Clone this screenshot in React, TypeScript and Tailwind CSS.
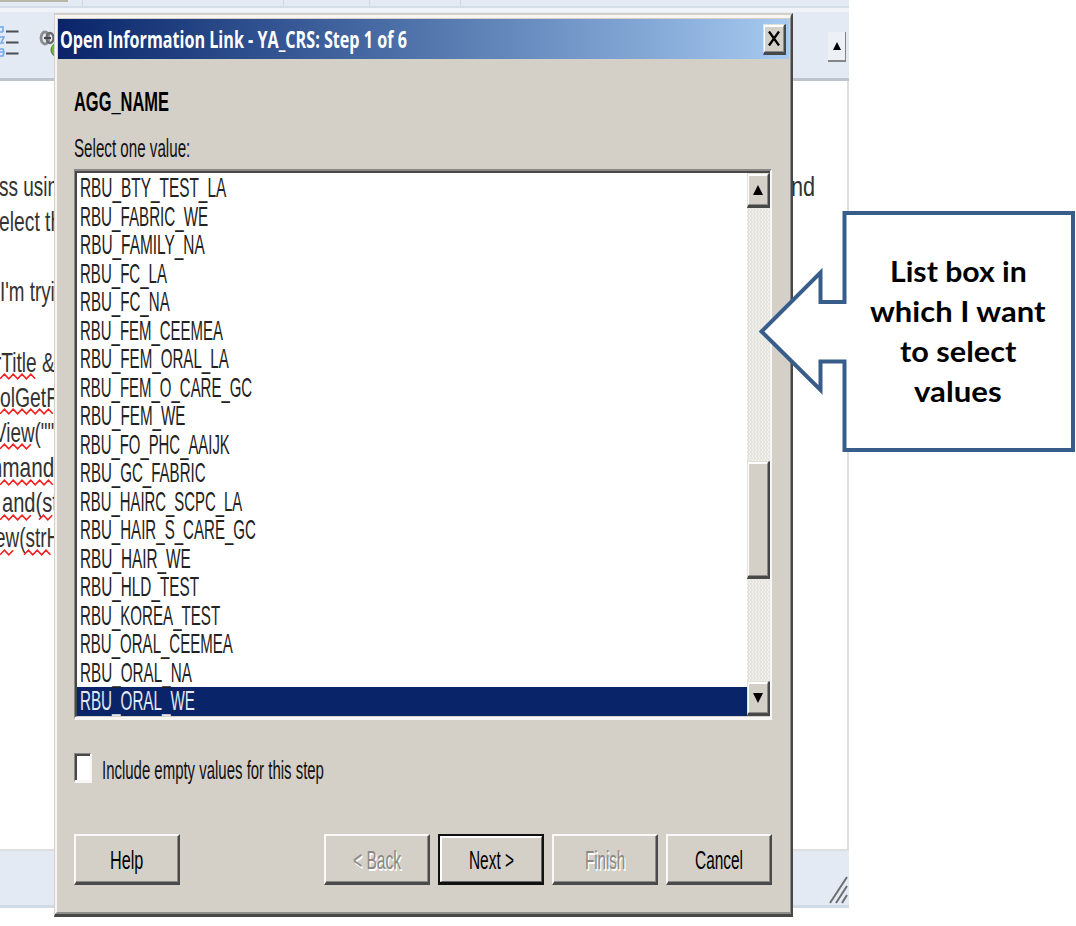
import { useLayoutEffect, useRef, useState } from "react";
import type { ReactNode } from "react";

type FitProps = { text: string; width: number; className?: string };

/* Text condensed horizontally so that it spans exactly `width` pixels. */
function FitText({ text, width, className = "" }: FitProps) {
  const ref = useRef<HTMLSpanElement>(null);
  const [scale, setScale] = useState(0.6);
  useLayoutEffect(() => {
    if (ref.current) setScale(width / ref.current.offsetWidth);
  }, [text, width]);
  return (
    <span className={`block whitespace-pre ${className}`} style={{ width }}>
      <span ref={ref} className="inline-block origin-left" style={{ transform: `scaleX(${scale})` }}>
        {text}
      </span>
    </span>
  );
}

const rows: [string, number][] = [
  ["RBU_BTY_TEST_LA", 146],
  ["RBU_FABRIC_WE", 128],
  ["RBU_FAMILY_NA", 125],
  ["RBU_FC_LA", 87],
  ["RBU_FC_NA", 90],
  ["RBU_FEM_CEEMEA", 143],
  ["RBU_FEM_ORAL_LA", 149],
  ["RBU_FEM_O_CARE_GC", 172],
  ["RBU_FEM_WE", 105.5],
  ["RBU_FO_PHC_AAIJK", 150],
  ["RBU_GC_FABRIC", 125.5],
  ["RBU_HAIRC_SCPC_LA", 162.5],
  ["RBU_HAIR_S_CARE_GC", 176],
  ["RBU_HAIR_WE", 111],
  ["RBU_HLD_TEST", 119],
  ["RBU_KOREA_TEST", 140],
  ["RBU_ORAL_CEEMEA", 153],
  ["RBU_ORAL_NA", 112],
  ["RBU_ORAL_WE", 115],
];

type EditorLine = { text: string; x: number; width: number; marks?: [number, number][] };

const editorLines: EditorLine[] = [
  { text: "ss usin", x: -1, width: 59 },
  { text: "elect th", x: -1, width: 62 },
  { text: "", x: 0, width: 0 },
  { text: "I'm tryi", x: 0, width: 55 },
  { text: "", x: 0, width: 0 },
  { text: "rTitle &", x: -5, width: 60, marks: [[0, 37]] },
  { text: "olGetF", x: 0, width: 58, marks: [[0, 54]] },
  { text: 'View(""', x: -6, width: 60, marks: [[0, 32]] },
  { text: "mmand", x: -15, width: 69, marks: [[0, 54]] },
  { text: "and(st", x: 2, width: 56, marks: [[0, 35], [39, 54]] },
  { text: "ew(strH", x: -5, width: 65, marks: [[0, 17], [24, 54]] },
];

function Squiggle({ from, to }: { from: number; to: number }) {
  const pts: string[] = [];
  for (let x = from, i = 0; x <= to; x += 4.4, i++) pts.push(`${x},${i % 2 ? 1.2 : 5.8}`);
  return <polyline points={pts.join(" ")} fill="none" stroke="#f52020" strokeWidth="1.6" />;
}

function Editor() {
  return (
    <div className="flex h-[908px] w-[849px] flex-col bg-[#e3eaf3]">
      <div className="flex h-[12px] shrink-0 border-b-4 border-[#f0f4f9]">
        <div className="relative flex w-full border-b-2 border-[#d4dee8]">
          <div className="h-[2px] w-[68px] bg-[#b8b8a4]" />
          <div className="ml-[14px] w-px bg-[#cfd9e4]" />
          <div className="ml-[200px] w-px bg-[#cfd9e4]" />
          <div className="ml-[85px] w-px bg-[#cfd9e4]" />
          <div className="ml-[90px] w-px bg-[#cfd9e4]" />
        </div>
      </div>
      <div className="flex h-[69px] shrink-0 items-start justify-between border-b-[3px] border-[#bfc3cb]">
        <svg className="mt-[12px] h-[36px] w-[60px]" viewBox="0 24 60 36" fill="none">
          <path d="M0 27h3v5M0 32h3M0 37h4l-3 6h3M0 49h3l1 3-1 4H0M0 52h3" stroke="#72a9ee" strokeWidth="1.6" />
          <path d="M6 31.500h12.500M6 42.500h12.500M6 53.500h12.500" stroke="#4b4d50" strokeWidth="1.8" />
          <ellipse cx="45" cy="38" rx="4" ry="6" stroke="#8a8c8f" strokeWidth="2.800" />
          <ellipse cx="50" cy="38" rx="3.500" ry="5" stroke="#68696c" strokeWidth="2.400" />
          <path d="M44 38h7" stroke="#45474a" strokeWidth="2" />
          <ellipse cx="57" cy="50" rx="6" ry="6.500" fill="#6bbb36" stroke="#398014" />
        </svg>
        <div className="mt-[20px] mr-[3px] flex h-[30px] w-[18px] items-center justify-center border-r-[1.500px] border-b-2 border-[#858585] bg-[#edf0f4]">
          <svg className="h-[8px] w-[8px]" viewBox="0 0 8 8"><path d="M4 0l4 8H0z" fill="#000" /></svg>
        </div>
      </div>
      <div className="flex h-[770px] shrink-0 justify-between overflow-hidden border-r-2 border-b-2 border-[#dedede] bg-white pt-[88px] text-[28px] leading-[35.150px] text-[#333]">
        <div className="w-[54px] overflow-hidden">
          {editorLines.map((l, i) => (
            <div key={i} className="relative h-[35.150px]">
              {l.text && (
                <div style={{ marginLeft: l.x }}>
                  <FitText text={l.text} width={l.width} />
                </div>
              )}
              {l.marks && (
                <svg className="absolute top-[28.500px] left-0 h-[7px] w-[54px]" viewBox="0 0 54 7">
                  {l.marks.map(([a, b]) => <Squiggle key={a} from={a} to={b} />)}
                </svg>
              )}
            </div>
          ))}
        </div>
        <div className="mr-[32px]">
          <FitText text="nd" width={24} />
        </div>
      </div>
      <div className="flex h-[57px] shrink-0 items-end justify-end border-b-[3px] border-[#d0dae4]">
        <svg className="mb-px h-[28px] w-[20px]" viewBox="0 0 20 28">
          <path d="M1 27L18 1M7 27L18 10M13 27L18 19" stroke="#6c6e70" strokeWidth="2" />
        </svg>
      </div>
    </div>
  );
}

function Raised({ className = "", children }: { className?: string; children?: ReactNode }) {
  return (
    <div className={`shrink-0 border-t-[1.500px] border-r-2 border-b-[3px] border-l border-t-[#e4e0d8] border-r-[#484848] border-b-[#484848] border-l-[#e4e0d8] bg-[#d4d0c8] ${className}`}>
      <div className="flex h-full items-center justify-center border-t-2 border-r border-b border-l-[1.500px] border-t-white border-r-[#8c8a86] border-b-[#8c8a86] border-l-white">
        {children}
      </div>
    </div>
  );
}

type ButtonProps = { label: string; width: number; disabled?: boolean; focused?: boolean; className?: string };

function DialogButton({ label, width, disabled, focused, className = "" }: ButtonProps) {
  return (
    <button
      disabled={disabled}
      className={`flex h-[51px] w-[106px] shrink-0 border-t-2 border-r-2 border-b-[3px] border-l-2 ${
        focused
          ? "border-[#111]"
          : "border-t-[#faf9f7] border-r-[#4a4a4a] border-b-[#4a4a4a] border-l-[#faf9f7]"
      } ${className}`}
    >
      <span
        className={`flex h-full w-full items-center justify-center border-r border-b text-[26px] leading-[26px] ${
          focused ? "border-t-2 border-l-2 border-t-white border-r-[#666] border-b-[#666] border-l-white" : "border-[#8d8b87]"
        } ${disabled ? "text-[#8c8a86] [text-shadow:2px_2px_0_#fff]" : "text-black"}`}
      >
        <FitText text={label} width={width} className={focused ? "mt-px text-left" : "mt-[3px] text-left"} />
      </span>
    </button>
  );
}

function Scrollbar() {
  return (
    <div className="flex w-[23px] shrink-0 flex-col bg-[conic-gradient(#e6e4df_25%,#f3f2ef_0_50%,#e6e4df_0_75%,#f3f2ef_0)] bg-[length:3px_4px]">
      <Raised className="h-[35px]">
        <svg className="h-[10px] w-[10px]" viewBox="0 0 10 10"><path d="M5 0l5 10H0z" fill="#000" /></svg>
      </Raised>
      <Raised className="mt-[253px] h-[118px]" />
      <Raised className="mt-auto h-[35px]">
        <svg className="h-[10px] w-[10px]" viewBox="0 0 10 10"><path d="M0 0h10L5 10z" fill="#000" /></svg>
      </Raised>
    </div>
  );
}

function Dialog() {
  return (
    <div className="absolute top-[13px] left-[54px] flex h-[904px] w-[739px] flex-col border-t-2 border-r-2 border-b-[3px] border-l-[1.500px] border-t-[#d4d0c8] border-r-[#484848] border-b-[#484848] border-l-[#d4d0c8] bg-[#d4d0c8]">
      <div className="flex min-h-0 flex-1 flex-col border-t-[3px] border-r border-b-2 border-l-2 border-t-[#f8f6f2] border-r-[#8e8c88] border-b-[#8e8c88] border-l-[#f8f6f2]">
        <div className="mt-px mr-[1px] ml-[0.500px] flex h-[40px] shrink-0 items-center justify-between bg-linear-to-r from-[#0a246a] to-[#a6caf0] pr-[3px] pl-[2px] font-['Open_Sans',sans-serif] text-[24px] leading-[40px] font-bold text-white">
          <FitText text="Open Information Link - YA_CRS: Step 1 of 6" width={347} />
          <Raised className="h-[31px] w-[23px]">
            <svg className="h-[15px] w-[12px]" viewBox="0 0 12 15"><path d="M1 0.500L11 14.500M11 0.500L1 14.500" stroke="#000" strokeWidth="2.300" /></svg>
          </Raised>
        </div>
        <div className="flex flex-1 flex-col pr-[18px] pl-[17px] text-[26px] text-black">
          <FitText text="AGG_NAME" width={95} className="mt-[28px] text-[27px] leading-[30px] font-bold" />
          <FitText text="Select one value:" width={116} className="mt-[16px] leading-[30px] text-[#111]" />
          <div className="mt-[6px] h-[551px] w-[698px] border-t-2 border-r-2 border-b-[3px] border-l-[1.500px] border-t-[#8b8986] border-r-[#f8f7f5] border-b-[#f8f7f5] border-l-[#8b8986]">
            <div className="flex h-full border-t-2 border-b border-l-2 border-t-[#484848] border-b-[#d4d0c8] border-l-[#484848] bg-white">
              <div className="flex-1 pt-px text-[27.500px] leading-[28.530px] text-[#222]">
                {rows.map(([name, w]) => (
                  <div
                    key={name}
                    className={name === "RBU_ORAL_WE" ? "h-[28.530px] bg-[#0a246a] pl-[3px] text-[#e4e8f2]" : "h-[28.530px] pl-[3px]"}
                  >
                    <FitText text={name} width={w} />
                  </div>
                ))}
              </div>
              <Scrollbar />
            </div>
          </div>
          <div className="mt-[33px] flex h-[36px] items-start">
            <div className="h-[30px] w-[18px] border-t-[1.500px] border-r-2 border-b-[3px] border-l border-t-[#8b8986] border-r-[#f8f7f5] border-b-[#f8f7f5] border-l-[#8b8986]">
              <div className="h-full border-t-2 border-l-2 border-[#484848] bg-white" />
            </div>
            <FitText text="Include empty values for this step" width={222} className="mt-[2px] ml-[10px] leading-[30px] text-[#111]" />
          </div>
          <div className="mt-[45px] flex">
            <DialogButton label="Help" width={33} />
            <DialogButton label="< Back" width={48} disabled className="ml-[144px]" />
            <DialogButton label="Next >" width={45} focused className="ml-[8px]" />
            <DialogButton label="Finish" width={40} disabled className="ml-[8px]" />
            <DialogButton label="Cancel" width={48} className="ml-[8px]" />
          </div>
        </div>
      </div>
    </div>
  );
}

function Callout() {
  return (
    <div className="absolute top-[211px] left-[758px] h-[241px] w-[318px]">
      <svg className="absolute inset-0 h-full w-full" viewBox="758 211 318 241">
        <path d="M844.500 213H1073V450H844.500V361.500H820.500V390L761.500 331.500L820.500 272.500V302H844.500Z" fill="#fff" stroke="#385d8a" strokeWidth="4" />
      </svg>
      <div className="relative ml-[86px] flex h-full w-[228px] flex-col items-center pt-[40px] font-[Lato,sans-serif] text-[28px] leading-[40px] font-bold text-black">
        <FitText text="List box in" width={137} />
        <FitText text="which I want" width={176} />
        <FitText text="to select" width={116} />
        <FitText text="values" width={88} />
      </div>
    </div>
  );
}

export default function App() {
  return (
    <div className="relative h-[926px] w-[1076px] overflow-hidden bg-white font-['Liberation_Sans',sans-serif]">
      <Editor />
      <Dialog />
      <Callout />
    </div>
  );
}
